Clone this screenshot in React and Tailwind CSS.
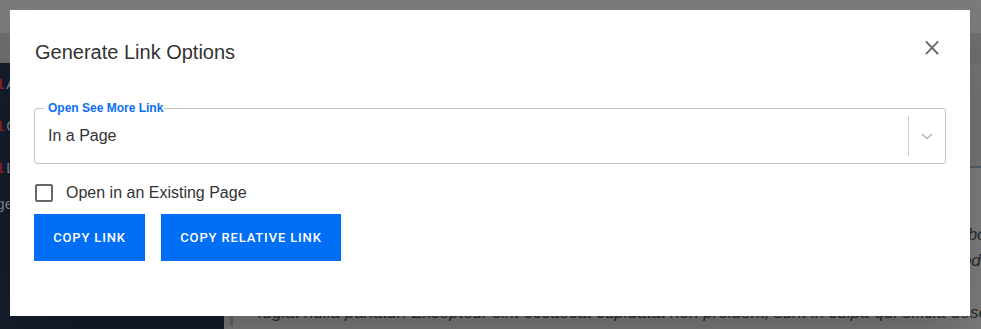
import { useState } from 'react';

const sidebarItems = [
  { mark: '1', label: 'Accounts' },
  { mark: '1', label: 'Contacts' },
  { mark: '1', label: 'Leads' },
];

const quoteLines = [
  'Lorem ipsum dolor sit amet, consectetur adipiscing elit, sed do eiusmod tempor incididunt ut labore et dolore magna aliqua.',
  'Ut enim ad minim veniam, quis nostrud exercitation ullamco laboris nisi ut aliquip ex ea commodo consequat. Duis au',
  'aute irure dolor in reprehenderit in voluptate velit esse cillum dolore eu fugiat nulla pariatur in',
  'fugiat nulla pariatur. Excepteur sint occaecat cupidatat non proident, sunt in culpa qui officia deserunt mollit anim id est laborum.',
];

function CloseIcon() {
  return (
    <svg width="24" height="24" viewBox="0 0 24 24" fill="none" stroke="#6b6b6b" strokeWidth="1.9" strokeLinecap="square">
      <path d="M6.5 6 L17.5 17.5 M17.5 6 L6.5 17.5" />
    </svg>
  );
}

function Chevron() {
  return (
    <svg width="12" height="7" viewBox="0 0 12 7" fill="none" stroke="#b8b8b8" strokeWidth="1.6">
      <path d="M1 1 L6 5.5 L11 1" />
    </svg>
  );
}

export default function App() {
  const [existing, setExisting] = useState(false);

  return (
    <div className="relative w-[981px] h-[329px] overflow-hidden font-['Liberation_Sans',Arial,sans-serif]">
      {/* dimmed page behind the dialog */}
      <div className="flex flex-col h-full">
        <div className="h-[33px] bg-[#7b7b7b]" />
        <div className="h-[30px] bg-[#6e6e6e]" />
        <div className="flex flex-1 min-h-0">
          <div className="w-[224px] shrink-0 bg-[#151c2b] text-[15px] overflow-hidden">
            {sidebarItems.map((item) => (
              <div key={item.label} className="h-[42px] flex items-center -ml-[4px] gap-[2px] whitespace-nowrap">
                <span className="text-[#8a1f2a] font-bold">{item.mark}</span>
                <span className="text-[#7d8593]">{item.label}</span>
              </div>
            ))}
            <div className="h-[30px] flex items-center -ml-[22px] text-[#7d8593]">Pages</div>
          </div>
          <div className="flex-1 min-w-0 overflow-hidden flex flex-col bg-[#7b7b7b]">
            <div className="h-[105px] shrink-0 bg-[#737373] border-b-2 border-[#4e5c6a]" />
            <div className="pl-[6px] pt-[54px]">
              <div className="border-l-[3px] border-[#5f6771] pl-[25px] italic text-[17px] leading-[26px] text-[#2a2a2a]">
                {quoteLines.map((line) => (
                  <div key={line} className="whitespace-nowrap">{line}</div>
                ))}
              </div>
            </div>
          </div>
        </div>
      </div>

      {/* dialog */}
      <div className="absolute left-[10px] top-[10px] w-[960px] h-[306px] bg-white shadow-2xl px-[24px] pt-[30px]">
        <div className="flex items-start justify-between">
          <h2 className="text-[20px] leading-6 text-[#333] ml-px">Generate Link Options</h2>
          <button className="-mt-[4px] mr-[2px] w-6 h-6 flex items-center justify-center">
            <CloseIcon />
          </button>
        </div>

        <div className="relative mt-[44px] h-[56px] border border-[#c4c4c4] rounded-[3px] flex items-center">
          <span className="absolute -top-[8px] left-[9px] bg-white pl-[4px] pr-px text-[12px] leading-[14px] font-bold text-[#0b6ef3]">
            Open See More Link
          </span>
          <span className="flex-1 pl-[13px] text-[16px] text-[#333]">In a Page</span>
          <div className="w-px h-[40px] bg-[#cccccc]" />
          <div className="w-[36px] flex items-center justify-center">
            <Chevron />
          </div>
        </div>

        <label className="mt-[17px] h-[24px] flex items-center cursor-pointer">
          <span
            onClick={() => setExisting(!existing)}
            className="ml-px w-[18px] h-[18px] border-2 border-[#666] rounded-[2px]"
          />
          <span className="ml-[13px] text-[16px] text-[#333]">Open in an Existing Page</span>
        </label>

        <div className="mt-[9px] flex gap-[16px] font-['Roboto',Arial,sans-serif]">
          <button className="h-[47px] w-[111px] bg-[#006ef5] text-white text-[13px] font-medium tracking-[0.85px]">
            COPY LINK
          </button>
          <button className="h-[47px] w-[180px] bg-[#006ef5] text-white text-[13px] font-medium tracking-[0.85px]">
            COPY RELATIVE LINK
          </button>
        </div>
      </div>
    </div>
  );
}
